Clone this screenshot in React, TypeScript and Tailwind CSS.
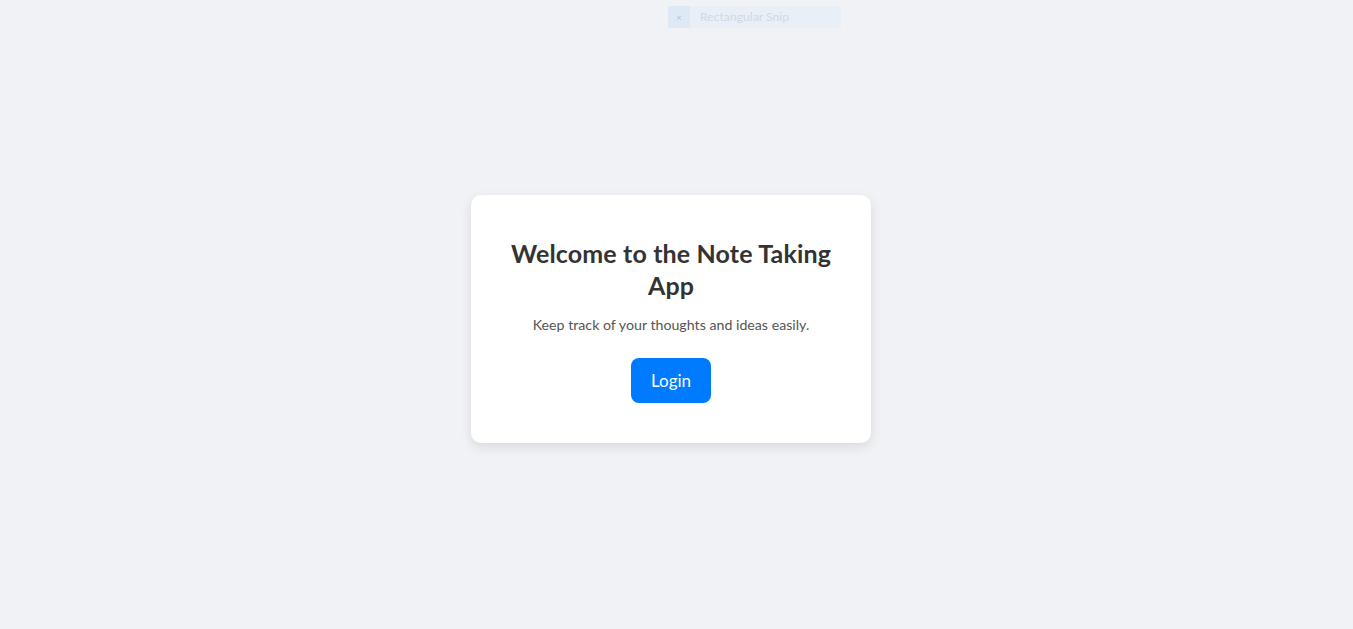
import React from "react"

export default function App() {
  return (
    <div
      className="relative min-h-screen w-full bg-[#f0f2f5] flex items-center justify-center pr-[11px] pt-[9px]"
      style={{ fontFamily: 'Lato, "Noto Sans", sans-serif' }}
    >
      {/* faint snipping tool overlay */}
      <div className="absolute top-[6px] left-[668px] flex h-[22px] w-[173px] items-center bg-[#e6eef8] opacity-70">
        <div className="flex h-full w-[22px] items-center justify-center bg-[#d9e6f5] text-[10px] text-[#9fb3c8]">
          ×
        </div>
        <span className="ml-[10px] text-[12.2px] text-[#c3cfdc]">Rectangular Snip</span>
      </div>

      <div className="w-[400px] rounded-[10px] bg-white px-10 pt-[42px] pb-10 text-center shadow-[0_4px_12px_rgba(0,0,0,0.1)]">
        <h1 className="text-[25px] font-bold leading-[32px] tracking-[0.15px] text-[#333]">
          Welcome to the Note Taking App
        </h1>
        <p className="mt-[14px] text-[14.2px] leading-[20px] text-[#555]">
          Keep track of your thoughts and ideas easily.
        </p>
        <button className="mt-[23px] h-[45px] w-[80px] rounded-[8px] bg-[#007bff] text-[17px] text-white">
          Login
        </button>
      </div>
    </div>
  )
}
